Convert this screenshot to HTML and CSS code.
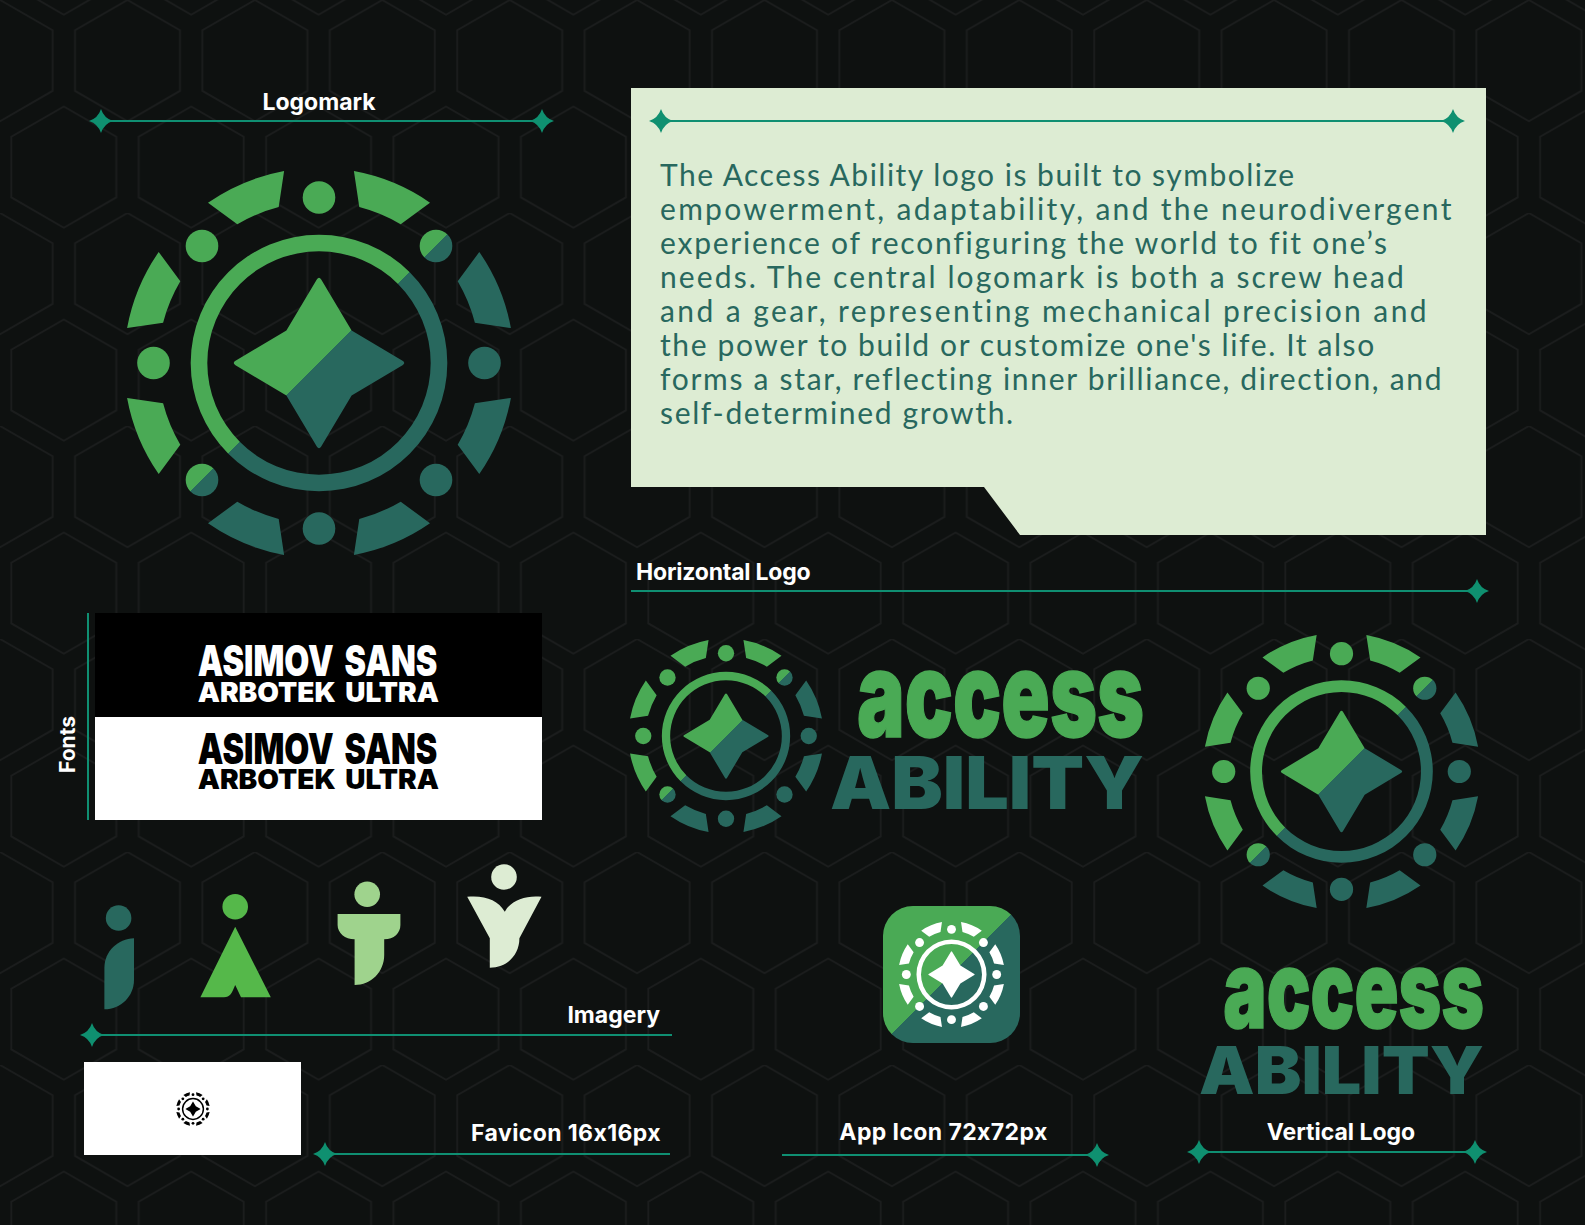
FILE: index.html
```html
<!DOCTYPE html>
<html lang="en">
<head>
    <meta charset="UTF-8">
    <title>Access Ability - Brand Sheet</title>
    <link rel="stylesheet" href="styles.css">
</head>
<body>

<!-- shared shapes -->
<svg class="defs" aria-hidden="true">
    <defs>
        <linearGradient id="split" gradientUnits="userSpaceOnUse" x1="-100" y1="-100" x2="100" y2="100">
            <stop offset="50%" stop-color="#4aaa55"/>
            <stop offset="50%" stop-color="#28685e"/>
        </linearGradient>
        <symbol id="mark" viewBox="-196 -196 392 392">
            <!-- outer gear segments -->
            <path d="M34.9 -191.9A195 195 0 0 1 111 -160.3L81.7 -138.7A161 161 0 0 0 40.3 -155.9Z"/>
            <path d="M160.3 -111A195 195 0 0 1 191.9 -34.9L155.9 -40.3A161 161 0 0 0 138.7 -81.7Z"/>
            <path d="M191.9 34.9A195 195 0 0 1 160.3 111L138.7 81.7A161 161 0 0 0 155.9 40.3Z"/>
            <path d="M111 160.3A195 195 0 0 1 34.9 191.9L40.3 155.9A161 161 0 0 0 81.7 138.7Z"/>
            <path d="M-34.9 191.9A195 195 0 0 1 -111 160.3L-81.7 138.7A161 161 0 0 0 -40.3 155.9Z"/>
            <path d="M-160.3 111A195 195 0 0 1 -191.9 34.9L-155.9 40.3A161 161 0 0 0 -138.7 81.7Z"/>
            <path d="M-191.9 -34.9A195 195 0 0 1 -160.3 -111L-138.7 -81.7A161 161 0 0 0 -155.9 -40.3Z"/>
            <path d="M-111 -160.3A195 195 0 0 1 -34.9 -191.9L-40.3 -155.9A161 161 0 0 0 -81.7 -138.7Z"/>
            <!-- dots -->
            <circle cx="0" cy="-165.5" r="16.3"/>
            <circle cx="117" cy="-117" r="16.3"/>
            <circle cx="165.5" cy="0" r="16.3"/>
            <circle cx="117" cy="117" r="16.3"/>
            <circle cx="0" cy="165.5" r="16.3"/>
            <circle cx="-117" cy="117" r="16.3"/>
            <circle cx="-165.5" cy="0" r="16.3"/>
            <circle cx="-117" cy="-117" r="16.3"/>
            <!-- ring -->
            <path fill-rule="evenodd" d="M0 -128.3A128.3 128.3 0 1 1 0 128.3A128.3 128.3 0 1 1 0 -128.3ZM0 -111.7A111.7 111.7 0 1 0 0 111.7A111.7 111.7 0 1 0 0 -111.7Z"/>
            <!-- star -->
            <path d="M-2.2 -83.5Q0 -87 2.2 -83.5L32.6 -32.6L83.5 -2.2Q87 0 83.5 2.2L32.6 32.6L2.2 83.5Q0 87 -2.2 83.5L-32.6 32.6L-83.5 2.2Q-87 0 -83.5 -2.2L-32.6 -32.6Z"/>
        </symbol>
        <symbol id="spark" viewBox="0 0 24 24">
            <path d="M12 0Q14.9 9.1 24 12Q14.9 14.9 12 24Q9.1 14.9 0 12Q9.1 9.1 12 0Z"/>
        </symbol>
        <pattern id="hexes" patternUnits="userSpaceOnUse" width="127.4" height="213" patternTransform="translate(63.8 0)">
            <path d="M63.7 0L116.2 30.3V90.9L63.7 121.2L11.2 90.9V30.3Z"/>
            <path d="M0 106.5L52.5 136.8V197.4L0 227.7L-52.5 197.4V136.8Z"/>
            <path d="M127.4 106.5L179.9 136.8V197.4L127.4 227.7L74.9 197.4V136.8Z"/>
            <path d="M0 -106.5L52.5 -76.2V-15.6L0 14.7L-52.5 -15.6V-76.2Z"/>
            <path d="M127.4 -106.5L179.9 -76.2V-15.6L127.4 14.7L74.9 -15.6V-76.2Z"/>
        </pattern>
    </defs>
</svg>

<main class="board">
    <svg class="hex-bg" aria-hidden="true"><rect width="100%" height="100%" fill="url(#hexes)"/></svg>

    <!-- logomark -->
    <section class="logomark">
        <h2 class="label label-center">Logomark</h2>
        <div class="rule">
            <svg class="spark"><use href="#spark"/></svg>
            <span class="line"></span>
            <svg class="spark"><use href="#spark"/></svg>
        </div>
        <svg class="mark-big" fill="url(#split)"><use href="#mark"/></svg>
    </section>

    <!-- description -->
    <section class="about">
        <div class="rule">
            <svg class="spark"><use href="#spark"/></svg>
            <span class="line"></span>
            <svg class="spark"><use href="#spark"/></svg>
        </div>
        <p class="about-text">
            <span>The Access Ability logo is built to symbolize</span>
            <span>empowerment, adaptability, and the neurodivergent</span>
            <span>experience of reconfiguring the world to fit one’s</span>
            <span>needs. The central logomark is both a screw head</span>
            <span>and a gear, representing mechanical precision and</span>
            <span>the power to build or customize one's life. It also</span>
            <span>forms a star, reflecting inner brilliance, direction, and</span>
            <span>self-determined growth.</span>
        </p>
    </section>

    <!-- horizontal logo heading -->
    <section class="horizontal-head">
        <h2 class="label label-left">Horizontal Logo</h2>
        <div class="rule">
            <span class="line"></span>
            <svg class="spark"><use href="#spark"/></svg>
        </div>
    </section>

    <!-- fonts -->
    <section class="fonts">
        <h2 class="label fonts-label">Fonts</h2>
        <span class="fonts-line"></span>
        <div class="fonts-table">
            <svg class="font-row font-row-dark" viewBox="0 0 447 104">
                <text class="font-a" x="102.7" y="63.4" textLength="239.6" lengthAdjust="spacingAndGlyphs">asimov sans</text>
                <text class="font-b" x="102.7" y="89" textLength="241.3" lengthAdjust="spacingAndGlyphs">ARBOTEK ULTRA</text>
            </svg>
            <svg class="font-row font-row-light" viewBox="0 0 447 103">
                <text class="font-a" x="102.7" y="46.6" textLength="239.6" lengthAdjust="spacingAndGlyphs">asimov sans</text>
                <text class="font-b" x="102.7" y="72.3" textLength="241.3" lengthAdjust="spacingAndGlyphs">ARBOTEK ULTRA</text>
            </svg>
        </div>
    </section>

    <!-- horizontal logo -->
    <section class="horizontal">
        <svg class="mark-mid" fill="url(#split)"><use href="#mark"/></svg>
        <svg class="word-mid" viewBox="0 -60 314 222">
            <text class="word-access" transform="scale(.67 1)" x="40.3" y="69.6" font-size="120" textLength="428.4" lengthAdjust="spacingAndGlyphs">access</text>
            <text class="word-ability" x="0" y="142" font-size="73" textLength="314" lengthAdjust="spacingAndGlyphs">ABILITY</text>
        </svg>
    </section>

    <!-- vertical logo -->
    <section class="vertical">
        <svg class="mark-tall" fill="url(#split)"><use href="#mark"/></svg>
        <svg class="word-tall" viewBox="0 -60 285 210">
            <text class="word-access" transform="scale(.67 1)" x="36.3" y="63.3" font-size="109" textLength="389.1" lengthAdjust="spacingAndGlyphs">access</text>
            <text class="word-ability" x="0" y="129" font-size="66.4" textLength="285" lengthAdjust="spacingAndGlyphs">ABILITY</text>
        </svg>
        <h2 class="label label-center vertical-label">Vertical Logo</h2>
        <div class="rule">
            <svg class="spark"><use href="#spark"/></svg>
            <span class="line"></span>
            <svg class="spark"><use href="#spark"/></svg>
        </div>
    </section>

    <!-- imagery + favicon -->
    <section class="imagery">
        <div class="imagery-top">
            <svg class="figures" viewBox="80 850 480 180">
                <g fill="#28685e">
                    <circle cx="118.6" cy="918" r="12.8"/>
                    <path d="M134 938.3C118 939 104.4 951 104.4 968V1009.3C121 1009.3 134 996 134 980Z"/>
                </g>
                <g fill="#55b84a">
                    <circle cx="235.2" cy="906.7" r="12.8"/>
                    <path d="M235.2 926.7L270.8 997.3H241L235.2 985C232 993 230 997.3 224 997.3H200.4Z"/>
                </g>
                <g fill="#9fd38d">
                    <circle cx="367.2" cy="894.3" r="12.8"/>
                    <path d="M337.6 914H400.4V925C400.4 933 394 939.3 384.2 939.3V955C384.2 972 371 985 354.6 985V939.3C345 939.3 337.6 933 337.6 925Z"/>
                </g>
                <g fill="#ddecd3">
                    <circle cx="504" cy="877" r="12.8"/>
                    <path d="M467.2 896.7C485 895 498 900 504.8 911.7C511 900 526 895 541.5 896.7L519.4 938.3C519.4 955 507 967.7 489.8 967.7V938.3Z"/>
                </g>
            </svg>
            <h2 class="label imagery-label">Imagery</h2>
        </div>
        <div class="rule">
            <svg class="spark"><use href="#spark"/></svg>
            <span class="line"></span>
        </div>
        <div class="favicon-row">
            <div class="favicon"><svg class="mark-fav" fill="#000"><use href="#mark"/></svg></div>
            <div class="favicon-side">
                <h2 class="label label-right">Favicon 16x16px</h2>
                <div class="rule">
                    <svg class="spark"><use href="#spark"/></svg>
                    <span class="line"></span>
                </div>
            </div>
        </div>
    </section>

    <!-- app icon -->
    <section class="app">
        <div class="app-icon"><svg class="mark-app" fill="#fff"><use href="#mark"/></svg></div>
        <h2 class="label label-center app-label">App Icon 72x72px</h2>
        <div class="rule">
            <span class="line"></span>
            <svg class="spark"><use href="#spark"/></svg>
        </div>
    </section>
</main>

</body>
</html>
```

FILE: styles.css
```css
/* Access Ability brand sheet */
* {
    box-sizing: border-box;
}
html, body {
    margin: 0;
    background-color: #0e1110;
}
.defs {
    position: absolute;
    width: 0;
    height: 0;
}
#hexes path {
    fill: none;
    stroke: #1b1d1d;
    stroke-width: 1.8;
}
.board {
    position: relative;
    width: 1585px;
    height: 1225px;
    overflow: hidden;
    display: grid;
    grid-template-columns: 631px 49px 505px 400px;
    grid-template-rows: 540px 60px 250px 375px;
    font-family: "Inter", "Liberation Sans", sans-serif;
    font-feature-settings: "calt" 0;
}
.hex-bg {
    position: absolute;
    top: 0;
    left: 0;
    width: 100%;
    height: 100%;
}
section {
    position: relative;
    min-width: 0;
}

/* labels and rules */
.label {
    margin: 0;
    font-size: 23px;
    line-height: 28px;
    font-weight: 700;
    color: #fff;
    white-space: nowrap;
}
.label-center {
    text-align: center;
}
.label-left {
    padding-left: 5px;
    letter-spacing: -0.2px;
}
.label-right {
    text-align: right;
    padding-right: 9px;
    letter-spacing: 0.4px;
}
.rule {
    display: flex;
    align-items: center;
    height: 24px;
}
.line {
    flex: 1;
    height: 2px;
    background-color: #0f8f72;
}
.spark + .line {
    margin-left: -4px;
}
.line + .spark {
    margin-left: -4px;
}
.spark {
    flex: none;
    width: 24px;
    height: 24px;
    fill: #0f9070;
    position: relative;
}

/* logomark */
.logomark {
    grid-column: 1;
    grid-row: 1;
    margin: 88px 0 0 89px;
    width: 465px;
}
.logomark .label {
    padding-right: 5px;
}
.logomark .rule {
    margin-top: -7px;
}
.mark-big {
    display: block;
    width: 392px;
    height: 392px;
    margin: 34px 0 0 34px;
}

/* description */
.about {
    grid-column: 2 / 5;
    grid-row: 1;
    margin-top: 88px;
    width: 855px;
    height: 447px;
    padding: 21px 0 0 18px;
    background-color: #ddecd3;
    clip-path: polygon(0 0, 100% 0, 100% 100%, 389px 100%, 353px 399px, 0 399px);
}
.about .rule {
    width: 816px;
}
.about-text {
    margin: 24px 0 0 11px;
    font-family: "Lato", "Liberation Sans", sans-serif;
    font-size: 30px;
    font-weight: 400;
    line-height: 34px;
    color: #28685e;
    white-space: nowrap;
}
.about-text span {
    display: block;
}
/* the lines break as in the artwork, each one fitted to its measure */
.about-text span:nth-child(1) { letter-spacing: 1.49px; }
.about-text span:nth-child(2) { letter-spacing: 2.3px; }
.about-text span:nth-child(3) { letter-spacing: 1.77px; }
.about-text span:nth-child(4) { letter-spacing: 2.11px; }
.about-text span:nth-child(5) { letter-spacing: 2.42px; }
.about-text span:nth-child(6) { letter-spacing: 1.61px; }
.about-text span:nth-child(7) { letter-spacing: 1.7px; }
.about-text span:nth-child(8) { letter-spacing: 1.65px; }

/* horizontal logo */
.horizontal-head {
    grid-column: 2 / 5;
    grid-row: 2;
    width: 858px;
    align-self: end;
    margin-bottom: -3px;
}
.horizontal-head .rule {
    margin-top: -7px;
}
.horizontal {
    grid-column: 2 / 4;
    grid-row: 3;
    display: flex;
    align-items: flex-start;
}
.mark-mid {
    flex: none;
    width: 196px;
    height: 196px;
    margin: 38px 0 0 -3px;
}
.word-mid {
    flex: none;
    width: 314px;
    height: 222px;
    margin: 7px 0 0 6px;
}
.word-access {
    font-family: "Inter", "Liberation Sans", sans-serif;
    font-weight: 900;
    fill: #4aaa55;
    stroke: #4aaa55;
    stroke-width: 1.5;
}
.word-ability {
    font-family: "Inter", "Liberation Sans", sans-serif;
    font-weight: 900;
    fill: #28685e;
}

/* fonts */
.fonts {
    grid-column: 1;
    grid-row: 3;
    display: flex;
    align-items: stretch;
    margin: 13px 0 30px 55px;
}
.fonts-label {
    writing-mode: vertical-rl;
    transform: rotate(180deg);
    align-self: flex-end;
    margin-bottom: 47px;
    width: 26px;
    line-height: 26px;
    font-size: 21px;
}
.fonts-line {
    width: 2px;
    margin-left: 6px;
    background-color: #0f8f72;
}
.fonts-table {
    margin-left: 6px;
    width: 447px;
}
.font-row {
    display: block;
    width: 447px;
}
.font-row-dark {
    height: 104px;
    background-color: #000;
    fill: #fff;
}
.font-row-light {
    height: 103px;
    background-color: #fff;
    fill: #000;
}
.font-a,
.font-b {
    font-family: "Inter", "Liberation Sans", sans-serif;
    font-weight: 900;
    text-transform: uppercase;
}
.font-a {
    font-size: 42.6px;
    word-spacing: 6px;
}
.font-b {
    font-size: 27.5px;
    word-spacing: 4px;
}

/* imagery and favicon */
.imagery {
    grid-column: 1 / 3;
    grid-row: 4;
    margin-left: 80px;
    width: 592px;
}
.imagery-top {
    display: flex;
    height: 173px;
    justify-content: space-between;
}
.figures {
    width: 480px;
    height: 180px;
    overflow: visible;
}
.imagery-label {
    align-self: flex-end;
    padding-right: 12px;
    margin-bottom: -6px;
}
.favicon-row {
    display: flex;
    align-items: flex-end;
    margin-top: 15px;
}
.favicon {
    display: flex;
    align-items: center;
    justify-content: center;
    flex: none;
    width: 217px;
    height: 93px;
    margin-left: 4px;
    background-color: #fff;
}
.mark-fav {
    width: 34px;
    height: 34px;
}
.favicon-side {
    flex: 1;
    margin: 0 2px -11px 12px;
}
.favicon-side .rule {
    margin-top: -5px;
}

/* app icon */
.app {
    grid-column: 3;
    grid-row: 4;
    margin-left: 102px;
    width: 327px;
}
.app-icon {
    display: flex;
    align-items: center;
    justify-content: center;
    width: 137px;
    height: 137px;
    margin: 56px 0 0 101px;
    border-radius: 30px;
    background: linear-gradient(135deg, #4aaa55 50%, #28685e 50%);
}
.mark-app {
    width: 107px;
    height: 107px;
}
.app-label {
    margin-top: 75px;
    padding-right: 4px;
    letter-spacing: 0.4px;
}
.app .rule {
    margin-top: -3px;
}

/* vertical logo */
.vertical {
    grid-column: 4;
    grid-row: 3 / 5;
}
.mark-tall {
    display: block;
    width: 279px;
    height: 279px;
    margin: 32px 0 0 17px;
}
.word-tall {
    display: block;
    width: 285px;
    height: 210px;
    margin: -6px 0 0 14px;
}
.vertical-label {
    margin-top: 3px;
    width: 300px;
    margin-left: 2px;
    padding-left: 8px;
}
.vertical .rule {
    margin-top: -6px;
    margin-left: 2px;
    width: 300px;
}
```
